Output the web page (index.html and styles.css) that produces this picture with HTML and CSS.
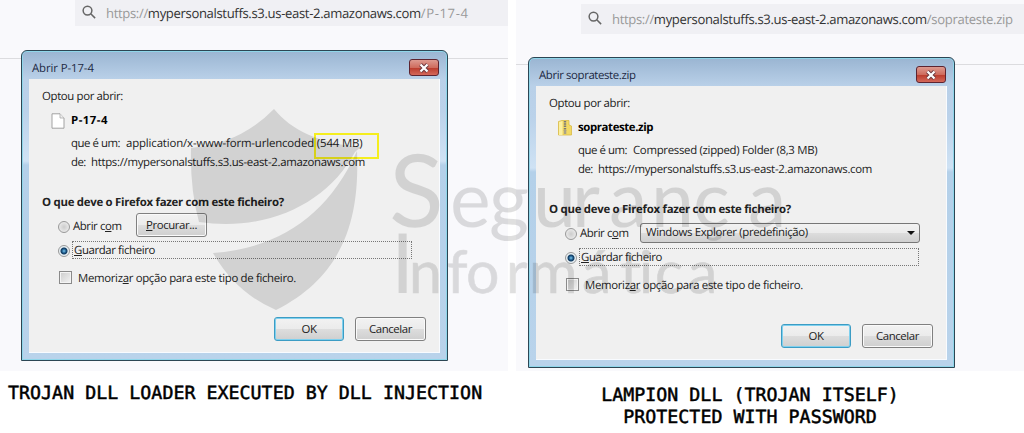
FILE: index.html
```
<!DOCTYPE html>
<html lang="pt">
<head>
<meta charset="utf-8">
<title>Segurança Informática</title>
<link rel="stylesheet" href="styles.css">
</head>
<body>
<main class="board">
  <section class="column">
    <div class="panel">
      <div class="toolbar toolbar-left">
        <div class="urlbar">
          <svg class="lens" viewBox="0 0 16 16"><circle cx="6.3" cy="6.3" r="5"/><path d="M10 10 15 15"/></svg>
          <span class="url"><i>https://</i>mypersonalstuffs.s3.us-east-2.amazonaws.com<i class="path-short">/P-17-4</i></span>
        </div>
      </div>
      <div class="page page-left">
        <div class="dialog">
          <header class="titlebar"><span class="spaced-2">Abrir P-17-4</span>
            <button class="close"><svg viewBox="0 0 12 10"><path d="M2.5 1.5 9.5 8.5M9.5 1.5 2.5 8.5" class="x-edge"/><path d="M2.5 1.5 9.5 8.5M9.5 1.5 2.5 8.5" class="x"/></svg></button>
          </header>
          <div class="client">
            <div class="intro">Optou por abrir:</div>
            <div class="file">
              <svg class="file-icon" viewBox="0 0 14 16"><path d="M1 .8H9L13 5V15.2H1Z" fill="#fff" stroke="#999" stroke-width=".9"/><path d="M9 .8V5H13" fill="#eee" stroke="#aaa" stroke-width=".8"/></svg>
              <b class="wide">P-17-4</b>
            </div>
            <div class="detail"><span class="kind">que é um:</span><span class="value spaced-1">application/x-www-form-urlencoded <span class="size">(544 MB)</span></span></div>
            <div class="detail"><span class="from">de:</span><span class="value">https://mypersonalstuffs.s3.us-east-2.amazonaws.com</span></div>
            <div class="question">O que deve o Firefox fazer com este ficheiro?</div>
            <div class="option open-with"><span class="radio"></span><span class="label">Abrir c<u>o</u>m</span><button class="btn browse"><u>P</u>rocurar...</button></div>
            <div class="option save"><span class="radio on"></span><span class="focus"><u>G</u>uardar ficheiro</span></div>
            <div class="option remember"><span class="check"></span><span>Memoriz<u>a</u>r opção para este tipo de ficheiro.</span></div>
            <div class="actions"><button class="btn ok">OK</button><button class="btn">Cancelar</button></div>
          </div>
        </div>
      </div>
    </div>
    <p class="caption caption-left">TROJAN DLL LOADER EXECUTED BY DLL INJECTION</p>
  </section>
  <section class="column">
    <div class="panel">
      <div class="toolbar toolbar-right">
        <div class="urlbar">
          <svg class="lens" viewBox="0 0 16 16"><circle cx="6.3" cy="6.3" r="5"/><path d="M10 10 15 15"/></svg>
          <span class="url"><i>https://</i>mypersonalstuffs.s3.us-east-2.amazonaws.com<i class="path-long">/soprateste.zip</i></span>
        </div>
      </div>
      <div class="page page-right">
        <div class="dialog">
          <header class="titlebar"><span class="spaced-4">Abrir soprateste.zip</span>
            <button class="close"><svg viewBox="0 0 12 10"><path d="M2.5 1.5 9.5 8.5M9.5 1.5 2.5 8.5" class="x-edge"/><path d="M2.5 1.5 9.5 8.5M9.5 1.5 2.5 8.5" class="x"/></svg></button>
          </header>
          <div class="client">
            <div class="intro">Optou por abrir:</div>
            <div class="file">
              <svg class="file-icon" viewBox="0 0 14 16"><path d="M.5 1.500 4 .5H11V5L13.500 6V15H.5Z" fill="#f2d964" stroke="#d9ba45" stroke-width=".8"/><path d="M1 2 4.500 1V15H1Z" fill="#fbf0a0"/><path d="M7 1V11" stroke="#7a7a78" stroke-width="2.400" stroke-dasharray="1.500 .8"/><path d="M5.800 10H8.300V14H5.800Z" fill="#a9a387"/></svg>
              <b class="spaced-4">soprateste.zip</b>
            </div>
            <div class="detail"><span class="kind">que é um:</span><span class="value">Compressed (zipped) Folder (8,3 MB)</span></div>
            <div class="detail"><span class="from">de:</span><span class="value">https://mypersonalstuffs.s3.us-east-2.amazonaws.com</span></div>
            <div class="question">O que deve o Firefox fazer com este ficheiro?</div>
            <div class="option open-with"><span class="radio"></span><span class="label">Abrir c<u>o</u>m</span><span class="select"><span>Windows Explorer (predefinição)</span><span class="arrow"></span></span></div>
            <div class="option save"><span class="radio on"></span><span class="focus"><u>G</u>uardar ficheiro</span></div>
            <div class="option remember"><span class="check"></span><span>Memoriz<u>a</u>r opção para este tipo de ficheiro.</span></div>
            <div class="actions"><button class="btn ok">OK</button><button class="btn">Cancelar</button></div>
          </div>
        </div>
      </div>
    </div>
    <p class="caption caption-right">LAMPION DLL (TROJAN ITSELF)<br>PROTECTED WITH PASSWORD</p>
  </section>
  <svg class="watermark" viewBox="0 0 1024 433">
    <path d="M274 109C291 130 320 144 361 147Q357 150 355 152C328 202 270 232 199 222Q190 190 191 148Q240 144 274 109Z"/>
    <path d="M357 151C359 205 352 272 276 310Q236 293 213 253C280 248 328 215 357 151Z"/>
    <text class="w1" y="227" x="389">S</text>
    <text class="w2" y="227" x="450 489 533 572 609 651 693 748">egurança</text>
    <text class="w3" y="293" x="391">I</text>
    <text class="w4" y="293" x="409 447 466 506 529 582 620 639 655 688">nformática</text>
  </svg>
</main>
</body>
</html>
```
FILE: styles.css
```
* { box-sizing: border-box; }
body { margin: 0; background: #fff; color: #222; font: 11.4px/18px "Open Sans", sans-serif; letter-spacing: -.3px; text-rendering: geometricPrecision; }
.board { position: relative; display: flex; gap: 8px; width: 1024px; height: 433px; overflow: hidden; }
.column { width: 508px; }
.panel { height: 371px; background: #f9f9fc; }
.toolbar { border-bottom: 1px solid #dcdcdf; }
.toolbar-left { height: 59px; padding-left: 75px; }
.toolbar-right { height: 65px; padding: 4px 0 0 65px; }
.urlbar { display: flex; align-items: center; height: 30px; background: #f0f0f4; padding-left: 7px; }
.toolbar-left .urlbar { height: 26px; }
.lens { width: 14px; height: 14px; margin-bottom: 2px; fill: none; stroke: #666; stroke-width: 1.7; }
.url { margin-left: 10px; font-size: 13.1px; letter-spacing: -.35px; color: #333; white-space: nowrap; }
.url i { font-style: normal; color: #999; }
.url .path-short { letter-spacing: .6px; }
.url .path-long { letter-spacing: -.32px; }
.page-left { padding-left: 21px; }
.page-right { padding-left: 12px; }
.dialog { width: 427px; height: 311px; margin-top: -9px; padding: 0 7px; border: 1px solid #2c4654; border-radius: 6px 6px 0 0; background: linear-gradient(#9ab5d2, #b9d0e8 28px, #bbd2ea 60px, #cfe2f4 110px, #b4d0e9 114px, #b9d3eb); box-shadow: inset 0 0 0 1px #8fd6ea; position: relative; }
.page-right .dialog { margin-top: -8px; }
.titlebar { display: flex; justify-content: space-between; height: 28px; padding: 8px 1px 0 3px; color: #1d2a44; line-height: 20px; }
.close { width: 30px; height: 17px; padding: 0; border: 1px solid #5d2430; border-radius: 3px; background: linear-gradient(#dd9a90, #cf6c5e 50%, #b93a2b 51%, #d4685a); display: flex; align-items: center; justify-content: center; }
.close svg { width: 12px; height: 10px; }
.x { stroke: #fff; stroke-width: 2.2; }
.x-edge { stroke: #6b3a40; stroke-width: 4; }
.client { height: 274px; background: #f0f0f0; border-right: 1px solid #f8fbff; border-bottom: 1px solid #f8fbff; padding: 7px 0 0 13px; white-space: nowrap; }
.intro { height: 20px; line-height: 22px; letter-spacing: -.35px; }
.file { display: flex; align-items: center; height: 22px; margin-top: 4px; padding-left: 9px; gap: 6px; color: #000; }
.file-icon { width: 14px; height: 16px; }
.wide { letter-spacing: .5px; }
.spaced-1 { letter-spacing: -.14px; }
.spaced-2 { letter-spacing: -.1px; }
.spaced-4 { letter-spacing: -.38px; }
.detail { display: flex; height: 19px; line-height: 19px; padding-left: 29px; gap: 6px; }
.kind { width: 49px; letter-spacing: -.45px; }
.from { width: 14px; letter-spacing: -.5px; }
.file + .detail { margin-top: 2px; }
.size { position: relative; }
.size::after { content: ""; position: absolute; left: -3px; top: -3px; width: 61px; height: 22px; border: 2px solid #f5ee1e; }
.question { margin-top: 21px; height: 20px; line-height: 20px; font-weight: bold; letter-spacing: -.27px; }
.option { display: flex; align-items: center; }
.open-with { height: 24px; margin-top: 2px; padding-left: 16px; }
.radio { width: 12px; height: 12px; margin-bottom: 1px; border: 1px solid #999; border-radius: 50%; background: radial-gradient(#ccc, #f4f4f4); flex: none; }
.radio.on { background: radial-gradient(#7cc8ee 0, #1d5a8c 2px, #123a5e 3px, #e8f0f4 4px); }
.btn { width: 71px; height: 24px; padding: 0; border: 1px solid #808080; border-radius: 3px; background: linear-gradient(#f2f2f2, #ebebeb 50%, #dddddd 51%, #cfcfcf); box-shadow: inset 0 0 0 1px #fafafa; color: #222; font: inherit; letter-spacing: -.4px; }
.browse { margin: 0 0 5px 3px; }
.label { width: 63px; padding-left: 3px; letter-spacing: -.4px; }
.save { height: 18px; margin-top: 3px; padding-left: 16px; gap: 2px; }
.focus { width: 340px; height: 18px; margin-bottom: 2px; line-height: 17px; border: 1px dotted #777; padding-left: 1px; letter-spacing: -.39px; }
.remember { height: 18px; margin-top: 10px; padding-left: 17px; gap: 6px; letter-spacing: -.32px; }
.check { width: 13px; height: 13px; margin-bottom: 4px; border: 1px solid #8a8a8a; background: linear-gradient(135deg, #ccc, #f4f4f4); box-shadow: inset 0 0 0 1px #f4f4f4; }
.select { display: flex; justify-content: space-between; align-items: center; width: 280px; height: 20px; margin-bottom: 3px; border: 1px solid #777; border-radius: 3px; background: linear-gradient(#f2f2f2, #ebebeb 50%, #dddddd 51%, #cfcfcf); padding: 0 4px 0 5px; letter-spacing: -.34px; }
.arrow { border: 4px solid transparent; border-top-color: #111; border-bottom: 0; }
.actions { display: flex; gap: 11px; margin-top: 29px; padding-left: 232px; }
.ok { width: 70px; border-color: #3c9cc4; box-shadow: inset 0 0 0 1px #7fd0ee; }
.caption { margin: 0; font: 18.27px/22px "DejaVu Sans Mono", monospace; letter-spacing: .03px; color: #000; -webkit-text-stroke: .5px #000; white-space: nowrap; }
.caption-left { padding: 12px 0 0 8px; }
.caption-right { padding: 14px 0 0 0; text-align: center; width: 468px; }
.watermark { position: absolute; inset: 0; width: 1024px; height: 433px; fill: #000; opacity: .12; font-family: Lato, sans-serif; letter-spacing: 0; pointer-events: none; }
.w1 { font-size: 101px; }
.w2 { font-size: 77px; }
.w3 { font-size: 83px; }
.w4 { font-size: 59px; stroke: #000; stroke-width: .6px; }
```
